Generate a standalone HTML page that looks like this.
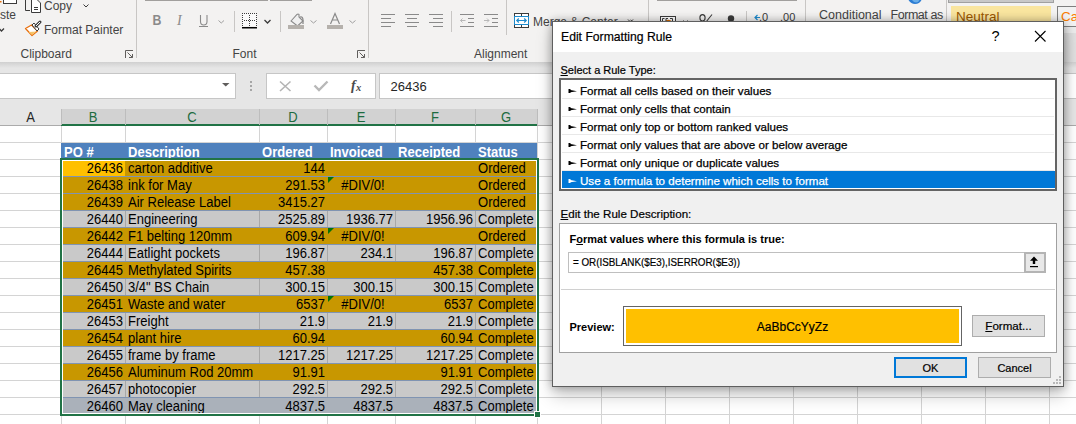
<!DOCTYPE html><html><head><meta charset="utf-8"><style>
html,body{margin:0;padding:0}
body{width:1076px;height:424px;overflow:hidden;position:relative;background:#fff;font-family:"Liberation Sans", sans-serif;}
div{box-sizing:border-box}
svg{position:absolute;overflow:visible}
</style></head><body>
<div style="position:absolute;left:0px;top:0px;width:1076px;height:62px;background:#f3f2f1"></div>
<div style="position:absolute;left:136px;top:0px;width:1px;height:58px;background:#c8c6c4"></div>
<div style="position:absolute;left:368px;top:0px;width:1px;height:58px;background:#c8c6c4"></div>
<div style="position:absolute;left:506px;top:0px;width:1px;height:35px;background:#c8c6c4"></div>
<div style="position:absolute;left:648px;top:0px;width:1px;height:21px;background:#c8c6c4"></div>
<div style="position:absolute;left:805px;top:0px;width:1px;height:21px;background:#c8c6c4"></div>
<div style="position:absolute;left:234px;top:11px;width:1px;height:21px;background:#c8c6c4"></div>
<div style="position:absolute;left:280px;top:11px;width:1px;height:21px;background:#c8c6c4"></div>
<div style="position:absolute;left:451px;top:11px;width:1px;height:21px;background:#c8c6c4"></div>
<div style="position:absolute;left:746px;top:11px;width:1px;height:10px;background:#c8c6c4"></div>
<div style="position:absolute;left:145px;top:0px;width:123px;height:1px;background:#a19f9d"></div>
<div style="position:absolute;left:270px;top:0px;width:42px;height:1px;background:#a19f9d"></div>
<div style="position:absolute;left:657px;top:0px;width:140px;height:1px;background:#a19f9d"></div>
<div style="position:absolute;top:8.84px;white-space:nowrap;font-size:12px;line-height:12px;color:#444444;left:0px;">ste</div>
<div style="position:absolute;top:-0.16px;white-space:nowrap;font-size:12px;line-height:12px;color:#444444;left:44px;">Copy</div>
<div style="position:absolute;top:23.84px;white-space:nowrap;font-size:12px;line-height:12px;color:#444444;left:44px;">Format Painter</div>
<div style="position:absolute;top:47.84px;white-space:nowrap;font-size:12px;line-height:12px;color:#444444;left:20.5px;">Clipboard</div>
<div style="position:absolute;top:47.84px;white-space:nowrap;font-size:12px;line-height:12px;color:#444444;left:232.5px;">Font</div>
<div style="position:absolute;top:47.84px;white-space:nowrap;font-size:12px;line-height:12px;color:#444444;left:474px;">Alignment</div>
<div style="position:absolute;top:15.84px;white-space:nowrap;font-size:12px;line-height:12px;color:#444444;left:533px;">Merge &amp; Center</div>
<div style="position:absolute;top:9.42px;white-space:nowrap;font-size:12.5px;line-height:12.5px;color:#444444;left:819px;">Conditional</div>
<div style="position:absolute;top:9.42px;white-space:nowrap;font-size:12.5px;line-height:12.5px;color:#444444;letter-spacing:-0.45px;left:890.5px;">Format as</div>
<div style="position:absolute;left:946px;top:0px;width:1px;height:22px;background:#c8c6c4"></div>
<div style="position:absolute;left:948px;top:0px;width:106px;height:3px;background:#c8c8c8;border:1px solid #a0a0a0;border-top:none"></div>
<div style="position:absolute;left:951px;top:6px;width:100px;height:16px;background:#f9e59f"></div>
<div style="position:absolute;top:9.57px;white-space:nowrap;font-size:13.5px;line-height:13.5px;color:#9c5700;left:956px;">Neutral</div>
<div style="position:absolute;left:1057px;top:6px;width:30px;height:21px;background:#f2f2f2;border:1px solid #7f7f7f"></div>
<div style="position:absolute;top:9.57px;white-space:nowrap;font-size:13.5px;line-height:13.5px;color:#fa7d00;left:1061px;">Ca</div>
<div style="position:absolute;left:1057px;top:27px;width:30px;height:6px;background:#ebebeb"></div>
<div style="position:absolute;left:1057px;top:33px;width:30px;height:29px;background:linear-gradient(to right,#d6d6d6,#e6e6e6)"></div>
<svg style="left:0;top:0" width="1076" height="62"><rect x="3.5" y="-3" width="13" height="6.5" fill="#fff" stroke="#3b3b3b"/><rect x="0" y="1" width="1.5" height="1.5" fill="#e8700f"/><path d="M-1,28.5 L1.5,31 L4,28.5" fill="none" stroke="#3b3b3b" stroke-width="1.3"/><path d="M25.5,0 V10.5 H30" fill="none" stroke="#3b3b3b"/><path d="M31.5,0 V12.5 H40.5 V3 L37.5,0" fill="#fff" stroke="#3b3b3b"/><path d="M34,7.5 H38 M34,9.5 H38" stroke="#3b3b3b"/><path d="M83.5,4.5 L86,7 L88.5,4.5" fill="none" stroke="#3b3b3b"/><polygon points="25.5,28.5 31.5,25 37.5,31 32,35.5" fill="#fff" stroke="#e8700f" stroke-width="1.3" stroke-linejoin="round"/><polygon points="28.5,32 36.5,31.5 32,35" fill="#f6c46a"/><polygon points="32,25 34,23 39,29 37,31" fill="#fff" stroke="#3b3b3b" stroke-linejoin="round"/><path d="M36,26 L40,22" stroke="#3b3b3b" stroke-width="3" stroke-linecap="round"/><path d="M36.3,25.7 L39.7,22.3" stroke="#fff" stroke-width="1" stroke-linecap="round"/><path d="M125.5,58 V50.5 H133" fill="none" stroke="#605e5c"/><path d="M127.5,52.5 L132.5,57.5 M132.5,54 V57.5 H129" fill="none" stroke="#605e5c"/><path d="M357.5,58 V50.5 H365" fill="none" stroke="#605e5c"/><path d="M359.5,52.5 L364.5,57.5 M364.5,54 V57.5 H361" fill="none" stroke="#605e5c"/><text x="179.5" y="25" transform="scale(0.85,1)" font-family="Liberation Sans" font-weight="bold" font-size="14.5" fill="#8a8a8a">B</text><text x="177" y="25" font-family="Liberation Serif" font-style="italic" font-size="14" fill="#8a8a8a">I</text><path d="M200.5,15 V21.5 Q200.5,25 203.75,25 Q207,25 207,21.5 V15" fill="none" stroke="#8a8a8a" stroke-width="1.1"/><rect x="199" y="26" width="9" height="1" fill="#8a8a8a"/><path d="M218.5,20.5 L221.25,23 L224,20.5" fill="none" stroke="#a0a0a0"/><rect x="242" y="13" width="15" height="13" fill="#fafafa"/><g fill="#3b3b3b"><rect x="242" y="13" width="1" height="1"/><rect x="244" y="13" width="1" height="1"/><rect x="246" y="13" width="1" height="1"/><rect x="248" y="13" width="1" height="1"/><rect x="250" y="13" width="1" height="1"/><rect x="252" y="13" width="1" height="1"/><rect x="254" y="13" width="1" height="1"/><rect x="256" y="13" width="1" height="1"/><rect x="242" y="15" width="1" height="1"/><rect x="256" y="15" width="1" height="1"/><rect x="249" y="15" width="1" height="1"/><rect x="242" y="17" width="1" height="1"/><rect x="256" y="17" width="1" height="1"/><rect x="249" y="17" width="1" height="1"/><rect x="242" y="19" width="1" height="1"/><rect x="256" y="19" width="1" height="1"/><rect x="249" y="19" width="1" height="1"/><rect x="242" y="21" width="1" height="1"/><rect x="256" y="21" width="1" height="1"/><rect x="249" y="21" width="1" height="1"/><rect x="242" y="23" width="1" height="1"/><rect x="256" y="23" width="1" height="1"/><rect x="249" y="23" width="1" height="1"/><rect x="242" y="25" width="1" height="1"/><rect x="256" y="25" width="1" height="1"/><rect x="249" y="25" width="1" height="1"/><rect x="244" y="20" width="1" height="1"/><rect x="246" y="20" width="1" height="1"/><rect x="248" y="20" width="1" height="1"/><rect x="250" y="20" width="1" height="1"/><rect x="252" y="20" width="1" height="1"/><rect x="254" y="20" width="1" height="1"/></g><rect x="242" y="27" width="15" height="1.5" fill="#000"/><path d="M264.5,20 L267.5,23 L270.5,20" fill="none" stroke="#3b3b3b" stroke-width="1.3"/><path d="M291,21 L297,14.5 Q298,13.5 299,14.5 L299,17 L303,21 L297.5,26 Z" fill="#f0f0f0" stroke="#8a8a8a" stroke-width="1.1"/><path d="M300,17 Q303,16 303,20.5 V24" fill="none" stroke="#8a8a8a" stroke-width="1.3"/><rect x="288" y="25" width="16" height="4" fill="#b5b1ac"/><path d="M310.5,20.5 L313.5,23 L316.5,20.5" fill="none" stroke="#a0a0a0"/><path d="M330.5,24 L335,13.5 L339.5,24 M332.2,20 H337.8" fill="none" stroke="#8a8a8a" stroke-width="1.2"/><rect x="327" y="25" width="16" height="4" fill="#b5b1ac"/><path d="M349.5,20.5 L352.5,23 L355.5,20.5" fill="none" stroke="#a0a0a0"/><rect x="381" y="14" width="14" height="1" fill="#8a8a8a"/><rect x="381" y="18" width="10" height="1" fill="#8a8a8a"/><rect x="381" y="22" width="14" height="1" fill="#8a8a8a"/><rect x="381" y="26" width="10" height="1" fill="#8a8a8a"/><rect x="405" y="14" width="14" height="1" fill="#8a8a8a"/><rect x="407" y="18" width="10" height="1" fill="#8a8a8a"/><rect x="405" y="22" width="14" height="1" fill="#8a8a8a"/><rect x="407" y="26" width="10" height="1" fill="#8a8a8a"/><rect x="429" y="14" width="14" height="1" fill="#8a8a8a"/><rect x="433" y="18" width="10" height="1" fill="#8a8a8a"/><rect x="429" y="22" width="14" height="1" fill="#8a8a8a"/><rect x="433" y="26" width="10" height="1" fill="#8a8a8a"/><rect x="460" y="14" width="14" height="1" fill="#8a8a8a"/><rect x="468" y="18" width="6" height="1" fill="#8a8a8a"/><rect x="468" y="22" width="6" height="1" fill="#8a8a8a"/><rect x="460" y="26" width="14" height="1" fill="#8a8a8a"/><path d="M465.5,20.5 H460.5 M462.5,18.5 L460.5,20.5 L462.5,22.5" fill="none" stroke="#b8b8b8"/><rect x="484" y="14" width="14" height="1" fill="#8a8a8a"/><rect x="492" y="18" width="6" height="1" fill="#8a8a8a"/><rect x="492" y="22" width="6" height="1" fill="#8a8a8a"/><rect x="484" y="26" width="14" height="1" fill="#8a8a8a"/><path d="M484,20.5 H489 M487,18.5 L489,20.5 L487,22.5" fill="none" stroke="#b8b8b8"/><rect x="514.5" y="13.5" width="14" height="14" fill="#fff" stroke="#3b3b3b"/><path d="M521.5,13.5 V27.5" stroke="#3b3b3b"/><rect x="514.5" y="16.5" width="14" height="8" fill="#fff" stroke="#1e8bcd"/><path d="M517,20.5 H526 M518.8,18.5 L516.8,20.5 L518.8,22.5 M524.2,18.5 L526.2,20.5 L524.2,22.5" fill="none" stroke="#1e8bcd" stroke-width="1.2"/><path d="M628,19.5 L630.5,22 L633,19.5" fill="none" stroke="#3b3b3b"/><path d="M630.5,20 L632.5,21.5" fill="none" stroke="#3b3b3b"/><rect x="660.5" y="16.5" width="15" height="6" fill="#fff" stroke="#3b3b3b"/><path d="M665,22 Q668,19 672,22" fill="none" stroke="#d86c00" stroke-width="1.5"/><path d="M683.5,20.5 L685.5,22.5 L687.5,20.5" fill="none" stroke="#3b3b3b"/><ellipse cx="702.5" cy="17.8" rx="2.6" ry="3.2" fill="none" stroke="#3b3b3b" stroke-width="1.1"/><path d="M712,14.5 L706,22" stroke="#3b3b3b" stroke-width="1.1"/><path d="M662.5,21 V18.5 H664.5 M666,21 V18.5 H668 M670,18.5 H672.5 V21" fill="none" stroke="#3b3b3b" stroke-width="1"/><circle cx="731" cy="18.5" r="3.2" fill="#3b3b3b"/><path d="M760,17.5 H755 M757.5,15 L755,17.5 L757.5,20" fill="none" stroke="#1e8bcd" stroke-width="1.2"/><text x="759" y="21" font-family="Liberation Sans" font-size="11" fill="#3b3b3b">.0</text><text x="780" y="21" font-family="Liberation Sans" font-size="11" fill="#3b3b3b">.00</text><path d="M908.5,0 Q911,4 915,4 Q919.5,4 921.5,0 Z" fill="#2b7cd3"/><path d="M912,0 Q914,2.5 916,2.5 Q918.5,2.5 919.5,0 Z" fill="#6aaee8"/></svg>
<div style="position:absolute;left:0px;top:62px;width:1076px;height:47px;background:#e6e6e6"></div>
<div style="position:absolute;left:0px;top:62px;width:1076px;height:6px;background:linear-gradient(#d0d0d0,#e6e6e6)"></div>
<div style="position:absolute;left:-1px;top:73px;width:237px;height:26px;background:#fff;border:1px solid #c6c6c6"></div>
<div style="position:absolute;left:266px;top:73px;width:110px;height:26px;background:#fff;border:1px solid #c6c6c6"></div>
<div style="position:absolute;left:379px;top:73px;width:700px;height:26px;background:#fff;border:1px solid #c6c6c6"></div>
<div style="position:absolute;top:80.00px;white-space:nowrap;font-size:13px;line-height:13px;color:#262626;left:390.5px;">26436</div>
<svg style="left:0;top:0" width="1076" height="110"><polygon points="222,83 229.5,83 225.75,86.5" fill="#605e5c"/><rect x="250" y="81" width="2" height="2" fill="#a6a6a6"/><rect x="250" y="85" width="2" height="2" fill="#a6a6a6"/><rect x="250" y="89" width="2" height="2" fill="#a6a6a6"/><path d="M280,81.5 L290.5,91 M290.5,81.5 L280,91" stroke="#b4b4b4" stroke-width="1.6"/><path d="M314.5,85.5 L319,90 L327.5,81.5" fill="none" stroke="#b8b8b8" stroke-width="2.4"/><text x="351" y="90" font-family="Liberation Serif" font-style="italic" font-weight="bold" font-size="14" fill="#4a4a4a">f</text><text x="356" y="90.5" font-family="Liberation Serif" font-style="italic" font-weight="bold" font-size="10.5" fill="#4a4a4a">x</text></svg>
<div style="position:absolute;left:0px;top:109px;width:1076px;height:17px;background:#e6e6e6"></div>
<div style="position:absolute;left:61px;top:109px;width:476px;height:16px;background:#d2d2d2"></div>
<div style="position:absolute;left:0px;top:125px;width:1076px;height:1px;background:#ababab"></div>
<div style="position:absolute;left:61px;top:124px;width:476px;height:2px;background:#217346"></div>
<div style="position:absolute;left:61px;top:109px;width:1px;height:16px;background:#bdbdbd"></div>
<div style="position:absolute;top:110.15px;white-space:nowrap;font-size:14px;line-height:14px;color:#262626;left:0px;width:61px;text-align:center;transform:scaleX(0.93);transform-origin:50% 0;">A</div>
<div style="position:absolute;left:125px;top:109px;width:1px;height:16px;background:#bdbdbd"></div>
<div style="position:absolute;top:110.15px;white-space:nowrap;font-size:14px;line-height:14px;color:#1d6b40;left:61px;width:64px;text-align:center;transform:scaleX(0.93);transform-origin:50% 0;">B</div>
<div style="position:absolute;left:259px;top:109px;width:1px;height:16px;background:#bdbdbd"></div>
<div style="position:absolute;top:110.15px;white-space:nowrap;font-size:14px;line-height:14px;color:#1d6b40;left:125px;width:134px;text-align:center;transform:scaleX(0.93);transform-origin:50% 0;">C</div>
<div style="position:absolute;left:327px;top:109px;width:1px;height:16px;background:#bdbdbd"></div>
<div style="position:absolute;top:110.15px;white-space:nowrap;font-size:14px;line-height:14px;color:#1d6b40;left:259px;width:68px;text-align:center;transform:scaleX(0.93);transform-origin:50% 0;">D</div>
<div style="position:absolute;left:395px;top:109px;width:1px;height:16px;background:#bdbdbd"></div>
<div style="position:absolute;top:110.15px;white-space:nowrap;font-size:14px;line-height:14px;color:#1d6b40;left:327px;width:68px;text-align:center;transform:scaleX(0.93);transform-origin:50% 0;">E</div>
<div style="position:absolute;left:475px;top:109px;width:1px;height:16px;background:#bdbdbd"></div>
<div style="position:absolute;top:110.15px;white-space:nowrap;font-size:14px;line-height:14px;color:#1d6b40;left:395px;width:80px;text-align:center;transform:scaleX(0.93);transform-origin:50% 0;">F</div>
<div style="position:absolute;left:537px;top:109px;width:1px;height:16px;background:#bdbdbd"></div>
<div style="position:absolute;top:110.15px;white-space:nowrap;font-size:14px;line-height:14px;color:#1d6b40;left:475px;width:62px;text-align:center;transform:scaleX(0.93);transform-origin:50% 0;">G</div>
<div style="position:absolute;left:601px;top:109px;width:1px;height:16px;background:#bdbdbd"></div>
<div style="position:absolute;top:110.15px;white-space:nowrap;font-size:14px;line-height:14px;color:#262626;left:537px;width:64px;text-align:center;transform:scaleX(0.93);transform-origin:50% 0;">H</div>
<div style="position:absolute;left:665px;top:109px;width:1px;height:16px;background:#bdbdbd"></div>
<div style="position:absolute;top:110.15px;white-space:nowrap;font-size:14px;line-height:14px;color:#262626;left:601px;width:64px;text-align:center;transform:scaleX(0.93);transform-origin:50% 0;">I</div>
<div style="position:absolute;left:729px;top:109px;width:1px;height:16px;background:#bdbdbd"></div>
<div style="position:absolute;top:110.15px;white-space:nowrap;font-size:14px;line-height:14px;color:#262626;left:665px;width:64px;text-align:center;transform:scaleX(0.93);transform-origin:50% 0;">J</div>
<div style="position:absolute;left:793px;top:109px;width:1px;height:16px;background:#bdbdbd"></div>
<div style="position:absolute;top:110.15px;white-space:nowrap;font-size:14px;line-height:14px;color:#262626;left:729px;width:64px;text-align:center;transform:scaleX(0.93);transform-origin:50% 0;">K</div>
<div style="position:absolute;left:857px;top:109px;width:1px;height:16px;background:#bdbdbd"></div>
<div style="position:absolute;top:110.15px;white-space:nowrap;font-size:14px;line-height:14px;color:#262626;left:793px;width:64px;text-align:center;transform:scaleX(0.93);transform-origin:50% 0;">L</div>
<div style="position:absolute;left:921px;top:109px;width:1px;height:16px;background:#bdbdbd"></div>
<div style="position:absolute;top:110.15px;white-space:nowrap;font-size:14px;line-height:14px;color:#262626;left:857px;width:64px;text-align:center;transform:scaleX(0.93);transform-origin:50% 0;">M</div>
<div style="position:absolute;left:985px;top:109px;width:1px;height:16px;background:#bdbdbd"></div>
<div style="position:absolute;top:110.15px;white-space:nowrap;font-size:14px;line-height:14px;color:#262626;left:921px;width:64px;text-align:center;transform:scaleX(0.93);transform-origin:50% 0;">N</div>
<div style="position:absolute;left:1049px;top:109px;width:1px;height:16px;background:#bdbdbd"></div>
<div style="position:absolute;top:110.15px;white-space:nowrap;font-size:14px;line-height:14px;color:#262626;left:985px;width:64px;text-align:center;transform:scaleX(0.93);transform-origin:50% 0;">O</div>
<div style="position:absolute;left:1113px;top:109px;width:1px;height:16px;background:#bdbdbd"></div>
<div style="position:absolute;top:110.15px;white-space:nowrap;font-size:14px;line-height:14px;color:#262626;left:1049px;width:64px;text-align:center;transform:scaleX(0.93);transform-origin:50% 0;">P</div>
<div style="position:absolute;left:0px;top:126px;width:1076px;height:298px;background:#fff"></div>
<div style="position:absolute;left:0px;top:142px;width:1076px;height:1px;background:#d4d4d4"></div>
<div style="position:absolute;left:0px;top:159px;width:1076px;height:1px;background:#d4d4d4"></div>
<div style="position:absolute;left:0px;top:176px;width:1076px;height:1px;background:#d4d4d4"></div>
<div style="position:absolute;left:0px;top:193px;width:1076px;height:1px;background:#d4d4d4"></div>
<div style="position:absolute;left:0px;top:210px;width:1076px;height:1px;background:#d4d4d4"></div>
<div style="position:absolute;left:0px;top:227px;width:1076px;height:1px;background:#d4d4d4"></div>
<div style="position:absolute;left:0px;top:244px;width:1076px;height:1px;background:#d4d4d4"></div>
<div style="position:absolute;left:0px;top:261px;width:1076px;height:1px;background:#d4d4d4"></div>
<div style="position:absolute;left:0px;top:278px;width:1076px;height:1px;background:#d4d4d4"></div>
<div style="position:absolute;left:0px;top:295px;width:1076px;height:1px;background:#d4d4d4"></div>
<div style="position:absolute;left:0px;top:312px;width:1076px;height:1px;background:#d4d4d4"></div>
<div style="position:absolute;left:0px;top:329px;width:1076px;height:1px;background:#d4d4d4"></div>
<div style="position:absolute;left:0px;top:346px;width:1076px;height:1px;background:#d4d4d4"></div>
<div style="position:absolute;left:0px;top:363px;width:1076px;height:1px;background:#d4d4d4"></div>
<div style="position:absolute;left:0px;top:380px;width:1076px;height:1px;background:#d4d4d4"></div>
<div style="position:absolute;left:0px;top:397px;width:1076px;height:1px;background:#d4d4d4"></div>
<div style="position:absolute;left:0px;top:414px;width:1076px;height:1px;background:#d4d4d4"></div>
<div style="position:absolute;left:61px;top:126px;width:1px;height:298px;background:#d4d4d4"></div>
<div style="position:absolute;left:125px;top:126px;width:1px;height:298px;background:#d4d4d4"></div>
<div style="position:absolute;left:259px;top:126px;width:1px;height:298px;background:#d4d4d4"></div>
<div style="position:absolute;left:327px;top:126px;width:1px;height:298px;background:#d4d4d4"></div>
<div style="position:absolute;left:395px;top:126px;width:1px;height:298px;background:#d4d4d4"></div>
<div style="position:absolute;left:475px;top:126px;width:1px;height:298px;background:#d4d4d4"></div>
<div style="position:absolute;left:537px;top:126px;width:1px;height:298px;background:#d4d4d4"></div>
<div style="position:absolute;left:601px;top:126px;width:1px;height:298px;background:#d4d4d4"></div>
<div style="position:absolute;left:665px;top:126px;width:1px;height:298px;background:#d4d4d4"></div>
<div style="position:absolute;left:729px;top:126px;width:1px;height:298px;background:#d4d4d4"></div>
<div style="position:absolute;left:793px;top:126px;width:1px;height:298px;background:#d4d4d4"></div>
<div style="position:absolute;left:857px;top:126px;width:1px;height:298px;background:#d4d4d4"></div>
<div style="position:absolute;left:921px;top:126px;width:1px;height:298px;background:#d4d4d4"></div>
<div style="position:absolute;left:985px;top:126px;width:1px;height:298px;background:#d4d4d4"></div>
<div style="position:absolute;left:1049px;top:126px;width:1px;height:298px;background:#d4d4d4"></div>
<div style="position:absolute;left:1113px;top:126px;width:1px;height:298px;background:#d4d4d4"></div>
<div style="position:absolute;left:61px;top:143px;width:476px;height:16px;background:#4f81bd"></div>
<div style="position:absolute;top:144.65px;white-space:nowrap;font-size:14px;line-height:14px;color:#fff;font-weight:bold;left:64px;transform:scaleX(0.93);transform-origin:0 0;">PO #</div>
<div style="position:absolute;top:144.65px;white-space:nowrap;font-size:14px;line-height:14px;color:#fff;font-weight:bold;left:128px;transform:scaleX(0.93);transform-origin:0 0;">Description</div>
<div style="position:absolute;top:144.65px;white-space:nowrap;font-size:14px;line-height:14px;color:#fff;font-weight:bold;left:262px;transform:scaleX(0.93);transform-origin:0 0;">Ordered</div>
<div style="position:absolute;top:144.65px;white-space:nowrap;font-size:14px;line-height:14px;color:#fff;font-weight:bold;left:330px;transform:scaleX(0.93);transform-origin:0 0;">Invoiced</div>
<div style="position:absolute;top:144.65px;white-space:nowrap;font-size:14px;line-height:14px;color:#fff;font-weight:bold;left:398px;transform:scaleX(0.93);transform-origin:0 0;">Receipted</div>
<div style="position:absolute;top:144.65px;white-space:nowrap;font-size:14px;line-height:14px;color:#fff;font-weight:bold;left:478px;transform:scaleX(0.93);transform-origin:0 0;">Status</div>
<div style="position:absolute;left:61px;top:160px;width:476px;height:16px;background:#c89700"></div>
<div style="position:absolute;left:61px;top:176px;width:476px;height:1px;background:#8094b2"></div>
<div style="position:absolute;left:62px;top:160px;width:63px;height:16px;background:#ffc000"></div>
<div style="position:absolute;top:161.15px;white-space:nowrap;font-size:14px;line-height:14px;color:#000;left:61px;width:62px;text-align:right;transform:scaleX(0.93);transform-origin:100% 0;">26436</div>
<div style="position:absolute;top:161.15px;white-space:nowrap;font-size:14px;line-height:14px;color:#000;left:128px;transform:scaleX(0.93);transform-origin:0 0;">carton additive</div>
<div style="position:absolute;top:161.15px;white-space:nowrap;font-size:14px;line-height:14px;color:#000;left:259px;width:66px;text-align:right;transform:scaleX(0.93);transform-origin:100% 0;">144</div>
<div style="position:absolute;top:161.15px;white-space:nowrap;font-size:14px;line-height:14px;color:#000;left:478px;transform:scaleX(0.93);transform-origin:0 0;">Ordered</div>
<div style="position:absolute;left:61px;top:177px;width:476px;height:16px;background:#c89700"></div>
<div style="position:absolute;left:61px;top:193px;width:476px;height:1px;background:#8094b2"></div>
<div style="position:absolute;top:178.15px;white-space:nowrap;font-size:14px;line-height:14px;color:#000;left:61px;width:62px;text-align:right;transform:scaleX(0.93);transform-origin:100% 0;">26438</div>
<div style="position:absolute;top:178.15px;white-space:nowrap;font-size:14px;line-height:14px;color:#000;left:128px;transform:scaleX(0.93);transform-origin:0 0;">ink for May</div>
<div style="position:absolute;top:178.15px;white-space:nowrap;font-size:14px;line-height:14px;color:#000;left:259px;width:66px;text-align:right;transform:scaleX(0.93);transform-origin:100% 0;">291.53</div>
<div style="position:absolute;top:178.15px;white-space:nowrap;font-size:14px;line-height:14px;color:#000;left:328.5px;width:68px;text-align:center;transform:scaleX(0.93);transform-origin:50% 0;">#DIV/0!</div>
<svg style="left:328px;top:177px" width="7" height="7"><polygon points="0,0 6,0 0,6" fill="#067306"/></svg>
<div style="position:absolute;top:178.15px;white-space:nowrap;font-size:14px;line-height:14px;color:#000;left:478px;transform:scaleX(0.93);transform-origin:0 0;">Ordered</div>
<div style="position:absolute;left:61px;top:194px;width:476px;height:16px;background:#c89700"></div>
<div style="position:absolute;left:61px;top:210px;width:476px;height:1px;background:#8094b2"></div>
<div style="position:absolute;top:195.15px;white-space:nowrap;font-size:14px;line-height:14px;color:#000;left:61px;width:62px;text-align:right;transform:scaleX(0.93);transform-origin:100% 0;">26439</div>
<div style="position:absolute;top:195.15px;white-space:nowrap;font-size:14px;line-height:14px;color:#000;left:128px;transform:scaleX(0.93);transform-origin:0 0;">Air Release Label</div>
<div style="position:absolute;top:195.15px;white-space:nowrap;font-size:14px;line-height:14px;color:#000;left:259px;width:66px;text-align:right;transform:scaleX(0.93);transform-origin:100% 0;">3415.27</div>
<div style="position:absolute;top:195.15px;white-space:nowrap;font-size:14px;line-height:14px;color:#000;left:478px;transform:scaleX(0.93);transform-origin:0 0;">Ordered</div>
<div style="position:absolute;left:61px;top:211px;width:476px;height:16px;background:#c9c9c9"></div>
<div style="position:absolute;left:61px;top:227px;width:476px;height:1px;background:#8094b2"></div>
<div style="position:absolute;left:125px;top:211px;width:1px;height:16px;background:#a8a8a8"></div>
<div style="position:absolute;left:259px;top:211px;width:1px;height:16px;background:#a8a8a8"></div>
<div style="position:absolute;left:327px;top:211px;width:1px;height:16px;background:#a8a8a8"></div>
<div style="position:absolute;left:395px;top:211px;width:1px;height:16px;background:#a8a8a8"></div>
<div style="position:absolute;left:475px;top:211px;width:1px;height:16px;background:#a8a8a8"></div>
<div style="position:absolute;top:212.15px;white-space:nowrap;font-size:14px;line-height:14px;color:#000;left:61px;width:62px;text-align:right;transform:scaleX(0.93);transform-origin:100% 0;">26440</div>
<div style="position:absolute;top:212.15px;white-space:nowrap;font-size:14px;line-height:14px;color:#000;left:128px;transform:scaleX(0.93);transform-origin:0 0;">Engineering</div>
<div style="position:absolute;top:212.15px;white-space:nowrap;font-size:14px;line-height:14px;color:#000;left:259px;width:66px;text-align:right;transform:scaleX(0.93);transform-origin:100% 0;">2525.89</div>
<div style="position:absolute;top:212.15px;white-space:nowrap;font-size:14px;line-height:14px;color:#000;left:327px;width:66px;text-align:right;transform:scaleX(0.93);transform-origin:100% 0;">1936.77</div>
<div style="position:absolute;top:212.15px;white-space:nowrap;font-size:14px;line-height:14px;color:#000;left:395px;width:78px;text-align:right;transform:scaleX(0.93);transform-origin:100% 0;">1956.96</div>
<div style="position:absolute;top:212.15px;white-space:nowrap;font-size:14px;line-height:14px;color:#000;left:478px;transform:scaleX(0.93);transform-origin:0 0;">Complete</div>
<div style="position:absolute;left:61px;top:228px;width:476px;height:16px;background:#c89700"></div>
<div style="position:absolute;left:61px;top:244px;width:476px;height:1px;background:#8094b2"></div>
<div style="position:absolute;top:229.15px;white-space:nowrap;font-size:14px;line-height:14px;color:#000;left:61px;width:62px;text-align:right;transform:scaleX(0.93);transform-origin:100% 0;">26442</div>
<div style="position:absolute;top:229.15px;white-space:nowrap;font-size:14px;line-height:14px;color:#000;left:128px;transform:scaleX(0.93);transform-origin:0 0;">F1 belting 120mm</div>
<div style="position:absolute;top:229.15px;white-space:nowrap;font-size:14px;line-height:14px;color:#000;left:259px;width:66px;text-align:right;transform:scaleX(0.93);transform-origin:100% 0;">609.94</div>
<div style="position:absolute;top:229.15px;white-space:nowrap;font-size:14px;line-height:14px;color:#000;left:328.5px;width:68px;text-align:center;transform:scaleX(0.93);transform-origin:50% 0;">#DIV/0!</div>
<svg style="left:328px;top:228px" width="7" height="7"><polygon points="0,0 6,0 0,6" fill="#067306"/></svg>
<div style="position:absolute;top:229.15px;white-space:nowrap;font-size:14px;line-height:14px;color:#000;left:478px;transform:scaleX(0.93);transform-origin:0 0;">Ordered</div>
<div style="position:absolute;left:61px;top:245px;width:476px;height:16px;background:#c9c9c9"></div>
<div style="position:absolute;left:61px;top:261px;width:476px;height:1px;background:#8094b2"></div>
<div style="position:absolute;left:125px;top:245px;width:1px;height:16px;background:#a8a8a8"></div>
<div style="position:absolute;left:259px;top:245px;width:1px;height:16px;background:#a8a8a8"></div>
<div style="position:absolute;left:327px;top:245px;width:1px;height:16px;background:#a8a8a8"></div>
<div style="position:absolute;left:395px;top:245px;width:1px;height:16px;background:#a8a8a8"></div>
<div style="position:absolute;left:475px;top:245px;width:1px;height:16px;background:#a8a8a8"></div>
<div style="position:absolute;top:246.15px;white-space:nowrap;font-size:14px;line-height:14px;color:#000;left:61px;width:62px;text-align:right;transform:scaleX(0.93);transform-origin:100% 0;">26444</div>
<div style="position:absolute;top:246.15px;white-space:nowrap;font-size:14px;line-height:14px;color:#000;left:128px;transform:scaleX(0.93);transform-origin:0 0;">Eatlight pockets</div>
<div style="position:absolute;top:246.15px;white-space:nowrap;font-size:14px;line-height:14px;color:#000;left:259px;width:66px;text-align:right;transform:scaleX(0.93);transform-origin:100% 0;">196.87</div>
<div style="position:absolute;top:246.15px;white-space:nowrap;font-size:14px;line-height:14px;color:#000;left:327px;width:66px;text-align:right;transform:scaleX(0.93);transform-origin:100% 0;">234.1</div>
<div style="position:absolute;top:246.15px;white-space:nowrap;font-size:14px;line-height:14px;color:#000;left:395px;width:78px;text-align:right;transform:scaleX(0.93);transform-origin:100% 0;">196.87</div>
<div style="position:absolute;top:246.15px;white-space:nowrap;font-size:14px;line-height:14px;color:#000;left:478px;transform:scaleX(0.93);transform-origin:0 0;">Complete</div>
<div style="position:absolute;left:61px;top:262px;width:476px;height:16px;background:#c89700"></div>
<div style="position:absolute;left:61px;top:278px;width:476px;height:1px;background:#8094b2"></div>
<div style="position:absolute;top:263.15px;white-space:nowrap;font-size:14px;line-height:14px;color:#000;left:61px;width:62px;text-align:right;transform:scaleX(0.93);transform-origin:100% 0;">26445</div>
<div style="position:absolute;top:263.15px;white-space:nowrap;font-size:14px;line-height:14px;color:#000;left:128px;transform:scaleX(0.93);transform-origin:0 0;">Methylated Spirits</div>
<div style="position:absolute;top:263.15px;white-space:nowrap;font-size:14px;line-height:14px;color:#000;left:259px;width:66px;text-align:right;transform:scaleX(0.93);transform-origin:100% 0;">457.38</div>
<div style="position:absolute;top:263.15px;white-space:nowrap;font-size:14px;line-height:14px;color:#000;left:395px;width:78px;text-align:right;transform:scaleX(0.93);transform-origin:100% 0;">457.38</div>
<div style="position:absolute;top:263.15px;white-space:nowrap;font-size:14px;line-height:14px;color:#000;left:478px;transform:scaleX(0.93);transform-origin:0 0;">Complete</div>
<div style="position:absolute;left:61px;top:279px;width:476px;height:16px;background:#c9c9c9"></div>
<div style="position:absolute;left:61px;top:295px;width:476px;height:1px;background:#8094b2"></div>
<div style="position:absolute;left:125px;top:279px;width:1px;height:16px;background:#a8a8a8"></div>
<div style="position:absolute;left:259px;top:279px;width:1px;height:16px;background:#a8a8a8"></div>
<div style="position:absolute;left:327px;top:279px;width:1px;height:16px;background:#a8a8a8"></div>
<div style="position:absolute;left:395px;top:279px;width:1px;height:16px;background:#a8a8a8"></div>
<div style="position:absolute;left:475px;top:279px;width:1px;height:16px;background:#a8a8a8"></div>
<div style="position:absolute;top:280.15px;white-space:nowrap;font-size:14px;line-height:14px;color:#000;left:61px;width:62px;text-align:right;transform:scaleX(0.93);transform-origin:100% 0;">26450</div>
<div style="position:absolute;top:280.15px;white-space:nowrap;font-size:14px;line-height:14px;color:#000;left:128px;transform:scaleX(0.93);transform-origin:0 0;">3/4&quot; BS Chain</div>
<div style="position:absolute;top:280.15px;white-space:nowrap;font-size:14px;line-height:14px;color:#000;left:259px;width:66px;text-align:right;transform:scaleX(0.93);transform-origin:100% 0;">300.15</div>
<div style="position:absolute;top:280.15px;white-space:nowrap;font-size:14px;line-height:14px;color:#000;left:327px;width:66px;text-align:right;transform:scaleX(0.93);transform-origin:100% 0;">300.15</div>
<div style="position:absolute;top:280.15px;white-space:nowrap;font-size:14px;line-height:14px;color:#000;left:395px;width:78px;text-align:right;transform:scaleX(0.93);transform-origin:100% 0;">300.15</div>
<div style="position:absolute;top:280.15px;white-space:nowrap;font-size:14px;line-height:14px;color:#000;left:478px;transform:scaleX(0.93);transform-origin:0 0;">Complete</div>
<div style="position:absolute;left:61px;top:296px;width:476px;height:16px;background:#c89700"></div>
<div style="position:absolute;left:61px;top:312px;width:476px;height:1px;background:#8094b2"></div>
<div style="position:absolute;top:297.15px;white-space:nowrap;font-size:14px;line-height:14px;color:#000;left:61px;width:62px;text-align:right;transform:scaleX(0.93);transform-origin:100% 0;">26451</div>
<div style="position:absolute;top:297.15px;white-space:nowrap;font-size:14px;line-height:14px;color:#000;left:128px;transform:scaleX(0.93);transform-origin:0 0;">Waste and water</div>
<div style="position:absolute;top:297.15px;white-space:nowrap;font-size:14px;line-height:14px;color:#000;left:259px;width:66px;text-align:right;transform:scaleX(0.93);transform-origin:100% 0;">6537</div>
<div style="position:absolute;top:297.15px;white-space:nowrap;font-size:14px;line-height:14px;color:#000;left:328.5px;width:68px;text-align:center;transform:scaleX(0.93);transform-origin:50% 0;">#DIV/0!</div>
<svg style="left:328px;top:296px" width="7" height="7"><polygon points="0,0 6,0 0,6" fill="#067306"/></svg>
<div style="position:absolute;top:297.15px;white-space:nowrap;font-size:14px;line-height:14px;color:#000;left:395px;width:78px;text-align:right;transform:scaleX(0.93);transform-origin:100% 0;">6537</div>
<div style="position:absolute;top:297.15px;white-space:nowrap;font-size:14px;line-height:14px;color:#000;left:478px;transform:scaleX(0.93);transform-origin:0 0;">Complete</div>
<div style="position:absolute;left:61px;top:313px;width:476px;height:16px;background:#c9c9c9"></div>
<div style="position:absolute;left:61px;top:329px;width:476px;height:1px;background:#8094b2"></div>
<div style="position:absolute;left:125px;top:313px;width:1px;height:16px;background:#a8a8a8"></div>
<div style="position:absolute;left:259px;top:313px;width:1px;height:16px;background:#a8a8a8"></div>
<div style="position:absolute;left:327px;top:313px;width:1px;height:16px;background:#a8a8a8"></div>
<div style="position:absolute;left:395px;top:313px;width:1px;height:16px;background:#a8a8a8"></div>
<div style="position:absolute;left:475px;top:313px;width:1px;height:16px;background:#a8a8a8"></div>
<div style="position:absolute;top:314.15px;white-space:nowrap;font-size:14px;line-height:14px;color:#000;left:61px;width:62px;text-align:right;transform:scaleX(0.93);transform-origin:100% 0;">26453</div>
<div style="position:absolute;top:314.15px;white-space:nowrap;font-size:14px;line-height:14px;color:#000;left:128px;transform:scaleX(0.93);transform-origin:0 0;">Freight</div>
<div style="position:absolute;top:314.15px;white-space:nowrap;font-size:14px;line-height:14px;color:#000;left:259px;width:66px;text-align:right;transform:scaleX(0.93);transform-origin:100% 0;">21.9</div>
<div style="position:absolute;top:314.15px;white-space:nowrap;font-size:14px;line-height:14px;color:#000;left:327px;width:66px;text-align:right;transform:scaleX(0.93);transform-origin:100% 0;">21.9</div>
<div style="position:absolute;top:314.15px;white-space:nowrap;font-size:14px;line-height:14px;color:#000;left:395px;width:78px;text-align:right;transform:scaleX(0.93);transform-origin:100% 0;">21.9</div>
<div style="position:absolute;top:314.15px;white-space:nowrap;font-size:14px;line-height:14px;color:#000;left:478px;transform:scaleX(0.93);transform-origin:0 0;">Complete</div>
<div style="position:absolute;left:61px;top:330px;width:476px;height:16px;background:#c89700"></div>
<div style="position:absolute;left:61px;top:346px;width:476px;height:1px;background:#8094b2"></div>
<div style="position:absolute;top:331.15px;white-space:nowrap;font-size:14px;line-height:14px;color:#000;left:61px;width:62px;text-align:right;transform:scaleX(0.93);transform-origin:100% 0;">26454</div>
<div style="position:absolute;top:331.15px;white-space:nowrap;font-size:14px;line-height:14px;color:#000;left:128px;transform:scaleX(0.93);transform-origin:0 0;">plant hire</div>
<div style="position:absolute;top:331.15px;white-space:nowrap;font-size:14px;line-height:14px;color:#000;left:259px;width:66px;text-align:right;transform:scaleX(0.93);transform-origin:100% 0;">60.94</div>
<div style="position:absolute;top:331.15px;white-space:nowrap;font-size:14px;line-height:14px;color:#000;left:395px;width:78px;text-align:right;transform:scaleX(0.93);transform-origin:100% 0;">60.94</div>
<div style="position:absolute;top:331.15px;white-space:nowrap;font-size:14px;line-height:14px;color:#000;left:478px;transform:scaleX(0.93);transform-origin:0 0;">Complete</div>
<div style="position:absolute;left:61px;top:347px;width:476px;height:16px;background:#c9c9c9"></div>
<div style="position:absolute;left:61px;top:363px;width:476px;height:1px;background:#8094b2"></div>
<div style="position:absolute;left:125px;top:347px;width:1px;height:16px;background:#a8a8a8"></div>
<div style="position:absolute;left:259px;top:347px;width:1px;height:16px;background:#a8a8a8"></div>
<div style="position:absolute;left:327px;top:347px;width:1px;height:16px;background:#a8a8a8"></div>
<div style="position:absolute;left:395px;top:347px;width:1px;height:16px;background:#a8a8a8"></div>
<div style="position:absolute;left:475px;top:347px;width:1px;height:16px;background:#a8a8a8"></div>
<div style="position:absolute;top:348.15px;white-space:nowrap;font-size:14px;line-height:14px;color:#000;left:61px;width:62px;text-align:right;transform:scaleX(0.93);transform-origin:100% 0;">26455</div>
<div style="position:absolute;top:348.15px;white-space:nowrap;font-size:14px;line-height:14px;color:#000;left:128px;transform:scaleX(0.93);transform-origin:0 0;">frame by frame</div>
<div style="position:absolute;top:348.15px;white-space:nowrap;font-size:14px;line-height:14px;color:#000;left:259px;width:66px;text-align:right;transform:scaleX(0.93);transform-origin:100% 0;">1217.25</div>
<div style="position:absolute;top:348.15px;white-space:nowrap;font-size:14px;line-height:14px;color:#000;left:327px;width:66px;text-align:right;transform:scaleX(0.93);transform-origin:100% 0;">1217.25</div>
<div style="position:absolute;top:348.15px;white-space:nowrap;font-size:14px;line-height:14px;color:#000;left:395px;width:78px;text-align:right;transform:scaleX(0.93);transform-origin:100% 0;">1217.25</div>
<div style="position:absolute;top:348.15px;white-space:nowrap;font-size:14px;line-height:14px;color:#000;left:478px;transform:scaleX(0.93);transform-origin:0 0;">Complete</div>
<div style="position:absolute;left:61px;top:364px;width:476px;height:16px;background:#c89700"></div>
<div style="position:absolute;left:61px;top:380px;width:476px;height:1px;background:#8094b2"></div>
<div style="position:absolute;top:365.15px;white-space:nowrap;font-size:14px;line-height:14px;color:#000;left:61px;width:62px;text-align:right;transform:scaleX(0.93);transform-origin:100% 0;">26456</div>
<div style="position:absolute;top:365.15px;white-space:nowrap;font-size:14px;line-height:14px;color:#000;left:128px;transform:scaleX(0.93);transform-origin:0 0;">Aluminum Rod 20mm</div>
<div style="position:absolute;top:365.15px;white-space:nowrap;font-size:14px;line-height:14px;color:#000;left:259px;width:66px;text-align:right;transform:scaleX(0.93);transform-origin:100% 0;">91.91</div>
<div style="position:absolute;top:365.15px;white-space:nowrap;font-size:14px;line-height:14px;color:#000;left:395px;width:78px;text-align:right;transform:scaleX(0.93);transform-origin:100% 0;">91.91</div>
<div style="position:absolute;top:365.15px;white-space:nowrap;font-size:14px;line-height:14px;color:#000;left:478px;transform:scaleX(0.93);transform-origin:0 0;">Complete</div>
<div style="position:absolute;left:61px;top:381px;width:476px;height:16px;background:#c9c9c9"></div>
<div style="position:absolute;left:61px;top:397px;width:476px;height:1px;background:#8094b2"></div>
<div style="position:absolute;left:125px;top:381px;width:1px;height:16px;background:#a8a8a8"></div>
<div style="position:absolute;left:259px;top:381px;width:1px;height:16px;background:#a8a8a8"></div>
<div style="position:absolute;left:327px;top:381px;width:1px;height:16px;background:#a8a8a8"></div>
<div style="position:absolute;left:395px;top:381px;width:1px;height:16px;background:#a8a8a8"></div>
<div style="position:absolute;left:475px;top:381px;width:1px;height:16px;background:#a8a8a8"></div>
<div style="position:absolute;top:382.15px;white-space:nowrap;font-size:14px;line-height:14px;color:#000;left:61px;width:62px;text-align:right;transform:scaleX(0.93);transform-origin:100% 0;">26457</div>
<div style="position:absolute;top:382.15px;white-space:nowrap;font-size:14px;line-height:14px;color:#000;left:128px;transform:scaleX(0.93);transform-origin:0 0;">photocopier</div>
<div style="position:absolute;top:382.15px;white-space:nowrap;font-size:14px;line-height:14px;color:#000;left:259px;width:66px;text-align:right;transform:scaleX(0.93);transform-origin:100% 0;">292.5</div>
<div style="position:absolute;top:382.15px;white-space:nowrap;font-size:14px;line-height:14px;color:#000;left:327px;width:66px;text-align:right;transform:scaleX(0.93);transform-origin:100% 0;">292.5</div>
<div style="position:absolute;top:382.15px;white-space:nowrap;font-size:14px;line-height:14px;color:#000;left:395px;width:78px;text-align:right;transform:scaleX(0.93);transform-origin:100% 0;">292.5</div>
<div style="position:absolute;top:382.15px;white-space:nowrap;font-size:14px;line-height:14px;color:#000;left:478px;transform:scaleX(0.93);transform-origin:0 0;">Complete</div>
<div style="position:absolute;left:61px;top:398px;width:476px;height:16px;background:#aab1ba"></div>
<div style="position:absolute;left:61px;top:414px;width:476px;height:1px;background:#8094b2"></div>
<div style="position:absolute;top:399.15px;white-space:nowrap;font-size:14px;line-height:14px;color:#000;left:61px;width:62px;text-align:right;transform:scaleX(0.93);transform-origin:100% 0;">26460</div>
<div style="position:absolute;top:399.15px;white-space:nowrap;font-size:14px;line-height:14px;color:#000;left:128px;transform:scaleX(0.93);transform-origin:0 0;">May cleaning</div>
<div style="position:absolute;top:399.15px;white-space:nowrap;font-size:14px;line-height:14px;color:#000;left:259px;width:66px;text-align:right;transform:scaleX(0.93);transform-origin:100% 0;">4837.5</div>
<div style="position:absolute;top:399.15px;white-space:nowrap;font-size:14px;line-height:14px;color:#000;left:327px;width:66px;text-align:right;transform:scaleX(0.93);transform-origin:100% 0;">4837.5</div>
<div style="position:absolute;top:399.15px;white-space:nowrap;font-size:14px;line-height:14px;color:#000;left:395px;width:78px;text-align:right;transform:scaleX(0.93);transform-origin:100% 0;">4837.5</div>
<div style="position:absolute;top:399.15px;white-space:nowrap;font-size:14px;line-height:14px;color:#000;left:478px;transform:scaleX(0.93);transform-origin:0 0;">Complete</div>
<div style="position:absolute;left:60px;top:158px;width:479px;height:258px;border:2px solid #217346"></div>
<div style="position:absolute;left:62px;top:160px;width:475px;height:254px;border:1px solid #fff"></div>
<div style="position:absolute;left:534px;top:411px;width:7px;height:7px;background:#217346;border:1px solid #fff"></div>
<div style="position:absolute;left:552px;top:21px;width:512px;height:366px;background:#f0f0f0;border:1px solid #5f5f5f;box-shadow:0 0 9px rgba(0,0,0,0.32),0 9px 16px rgba(0,0,0,0.2)"></div>
<div style="position:absolute;left:553px;top:22px;width:510px;height:30px;background:#fff"></div>
<div style="position:absolute;top:30.67px;white-space:nowrap;font-size:12.2px;line-height:12.2px;color:#000;left:561px;-webkit-text-stroke:0.2px #000;">Edit Formatting Rule</div>
<div style="position:absolute;top:28.73px;white-space:nowrap;font-size:14.5px;line-height:14.5px;color:#000;left:991.5px;">?</div>
<svg style="left:1034px;top:30px" width="13" height="13"><path d="M1,1 L11.5,11.5 M11.5,1 L1,11.5" stroke="#000" stroke-width="1.1"/></svg>
<div style="position:absolute;top:64.69px;white-space:nowrap;font-size:11px;line-height:11px;color:#000;left:560.5px;-webkit-text-stroke:0.2px #000;"><u>S</u>elect a Rule Type:</div>
<div style="position:absolute;left:559px;top:78px;width:498px;height:113px;background:#fff;border:2px solid #646464"></div>
<div style="position:absolute;left:562px;top:98px;width:492px;height:1px;background:#e8e8e8"></div>
<svg style="left:568px;top:89px" width="10" height="6"><polygon points="0.5,0 2.5,0 2.5,1 9,2.2 2.5,3.2 2.5,4 0.5,4" fill="#000"/></svg>
<div style="position:absolute;top:85.18px;white-space:nowrap;font-size:11.6px;line-height:11.6px;color:#000;left:580px;-webkit-text-stroke:0.25px #000">Format all cells based on their values</div>
<div style="position:absolute;left:562px;top:116px;width:492px;height:1px;background:#e8e8e8"></div>
<svg style="left:568px;top:107px" width="10" height="6"><polygon points="0.5,0 2.5,0 2.5,1 9,2.2 2.5,3.2 2.5,4 0.5,4" fill="#000"/></svg>
<div style="position:absolute;top:103.18px;white-space:nowrap;font-size:11.6px;line-height:11.6px;color:#000;left:580px;-webkit-text-stroke:0.25px #000">Format only cells that contain</div>
<div style="position:absolute;left:562px;top:134px;width:492px;height:1px;background:#e8e8e8"></div>
<svg style="left:568px;top:125px" width="10" height="6"><polygon points="0.5,0 2.5,0 2.5,1 9,2.2 2.5,3.2 2.5,4 0.5,4" fill="#000"/></svg>
<div style="position:absolute;top:121.18px;white-space:nowrap;font-size:11.6px;line-height:11.6px;color:#000;left:580px;-webkit-text-stroke:0.25px #000">Format only top or bottom ranked values</div>
<div style="position:absolute;left:562px;top:152px;width:492px;height:1px;background:#e8e8e8"></div>
<svg style="left:568px;top:143px" width="10" height="6"><polygon points="0.5,0 2.5,0 2.5,1 9,2.2 2.5,3.2 2.5,4 0.5,4" fill="#000"/></svg>
<div style="position:absolute;top:139.18px;white-space:nowrap;font-size:11.6px;line-height:11.6px;color:#000;left:580px;-webkit-text-stroke:0.25px #000">Format only values that are above or below average</div>
<div style="position:absolute;left:562px;top:170px;width:492px;height:1px;background:#e8e8e8"></div>
<svg style="left:568px;top:161px" width="10" height="6"><polygon points="0.5,0 2.5,0 2.5,1 9,2.2 2.5,3.2 2.5,4 0.5,4" fill="#000"/></svg>
<div style="position:absolute;top:157.18px;white-space:nowrap;font-size:11.6px;line-height:11.6px;color:#000;left:580px;-webkit-text-stroke:0.25px #000">Format only unique or duplicate values</div>
<div style="position:absolute;left:562px;top:171px;width:493px;height:17px;background:#0078d7"></div>
<svg style="left:568px;top:179px" width="10" height="6"><polygon points="0.5,0 2.5,0 2.5,1 9,2.2 2.5,3.2 2.5,4 0.5,4" fill="#fff"/></svg>
<div style="position:absolute;top:175.18px;white-space:nowrap;font-size:11.6px;line-height:11.6px;color:#fff;left:580px;-webkit-text-stroke:0.25px #fff">Use a formula to determine which cells to format</div>
<div style="position:absolute;top:208.18px;white-space:nowrap;font-size:11.6px;line-height:11.6px;color:#000;left:560.5px;-webkit-text-stroke:0.2px #000;"><u>E</u>dit the Rule Description:</div>
<div style="position:absolute;left:559px;top:223px;width:498px;height:130px;background:#fff;border:1px solid #a0a0a0"></div>
<div style="position:absolute;top:233.69px;white-space:nowrap;font-size:11px;line-height:11px;color:#000;font-weight:bold;left:569.5px;">F<u>o</u>rmat values where this formula is true:</div>
<div style="position:absolute;left:568px;top:252px;width:478px;height:21px;background:#fff;border:1px solid #bfbfbf"></div>
<div style="position:absolute;top:257.27px;white-space:nowrap;font-size:11.5px;line-height:11.5px;color:#000;left:572.5px;transform:scaleX(0.855);transform-origin:0 0;-webkit-text-stroke:0.2px #000;">= OR(ISBLANK($E3),ISERROR($E3))</div>
<div style="position:absolute;left:1024px;top:252px;width:22px;height:21px;background:#e8e8e8;border:2px solid #b4b4b4"></div>
<svg style="left:0;top:0" width="1076" height="424"><path d="M1034,256.5 L1030,260.8 H1032.8 V264 H1035.2 V260.8 H1038 Z" fill="#000"/><rect x="1030" y="266" width="8" height="1.2" fill="#000"/></svg>
<div style="position:absolute;left:561px;top:289px;width:494px;height:1px;background:#d0d0d0"></div>
<div style="position:absolute;top:321.69px;white-space:nowrap;font-size:11px;line-height:11px;color:#000;font-weight:bold;left:569.5px;">Preview:</div>
<div style="position:absolute;left:623px;top:306px;width:339px;height:40px;background:#fff;border:1px solid #646464"></div>
<div style="position:absolute;left:626px;top:309px;width:333px;height:34px;background:#ffc000"></div>
<div style="position:absolute;top:320.84px;white-space:nowrap;font-size:12px;line-height:12px;color:#000;left:626px;width:333px;text-align:center;-webkit-text-stroke:0.2px #000;">AaBbCcYyZz</div>
<div style="position:absolute;left:972px;top:315px;width:73px;height:22px;background:#e1e1e1;border:1px solid #adadad"></div>
<div style="position:absolute;top:320.18px;white-space:nowrap;font-size:11.6px;line-height:11.6px;color:#000;left:972px;width:73px;text-align:center;-webkit-text-stroke:0.2px #000;"><u>F</u>ormat...</div>
<div style="position:absolute;left:894px;top:357px;width:73px;height:21px;background:#e1e1e1;border:2px solid #0078d7"></div>
<div style="position:absolute;top:362.69px;white-space:nowrap;font-size:11px;line-height:11px;color:#000;left:894px;width:73px;text-align:center;-webkit-text-stroke:0.2px #000;">OK</div>
<div style="position:absolute;left:978px;top:357px;width:73px;height:21px;background:#e1e1e1;border:1px solid #adadad"></div>
<div style="position:absolute;top:362.69px;white-space:nowrap;font-size:11px;line-height:11px;color:#000;left:978px;width:73px;text-align:center;-webkit-text-stroke:0.2px #000;">Cancel</div>
<svg style="left:0;top:0" width="1076" height="424"><g fill="#b8b8b8"><rect x="1059" y="376" width="2" height="2"/><rect x="1056" y="379" width="2" height="2"/><rect x="1059" y="379" width="2" height="2"/><rect x="1053" y="382" width="2" height="2"/><rect x="1056" y="382" width="2" height="2"/><rect x="1059" y="382" width="2" height="2"/></g></svg>
</body></html>
